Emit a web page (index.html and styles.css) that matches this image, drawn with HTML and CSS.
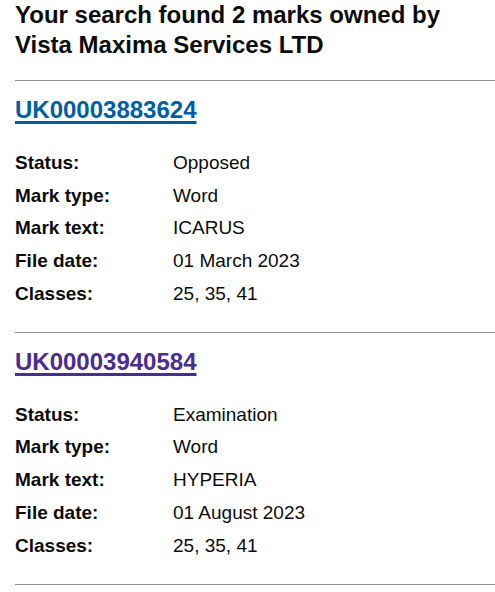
FILE: index.html
```html
<!DOCTYPE html>
<html>
<head>
    <title>Search results</title>
    <link rel="stylesheet" href="styles.css">
</head>
<body>
    <h1 class="page-title">Your search found 2 marks owned by Vista Maxima Services LTD</h1>

    <div class="result">
        <h2 class="mark-id"><a href="#">UK00003883624</a></h2>
        <dl class="summary">
            <div class="row"><dt>Status:</dt><dd>Opposed</dd></div>
            <div class="row"><dt>Mark type:</dt><dd>Word</dd></div>
            <div class="row"><dt>Mark text:</dt><dd>ICARUS</dd></div>
            <div class="row"><dt>File date:</dt><dd>01 March 2023</dd></div>
            <div class="row"><dt>Classes:</dt><dd>25, 35, 41</dd></div>
        </dl>
    </div>

    <div class="result">
        <h2 class="mark-id"><a href="#" class="visited">UK00003940584</a></h2>
        <dl class="summary">
            <div class="row"><dt>Status:</dt><dd>Examination</dd></div>
            <div class="row"><dt>Mark type:</dt><dd>Word</dd></div>
            <div class="row"><dt>Mark text:</dt><dd>HYPERIA</dd></div>
            <div class="row"><dt>File date:</dt><dd>01 August 2023</dd></div>
            <div class="row"><dt>Classes:</dt><dd>25, 35, 41</dd></div>
        </dl>
    </div>
    <div class="result"></div>
</body>
</html>
```

FILE: styles.css
```css
body { font-family: "Liberation Sans", Arial, sans-serif; color: #0b0c0c; margin: 0; padding: 0 0 0 15px; background: #fff; }
.page-title { font-size: 24px; line-height: 30px; font-weight: 700; margin: 0 0 20px; }
.result { border-top: 1px solid #8e8e8e; padding-top: 14px; }
.mark-id { font-size: 24px; line-height: 30px; font-weight: 700; margin: 0 0 25px; }
.mark-id a { color: #005ea5; text-decoration-thickness: 3px; text-underline-offset: 3px; }
.mark-id a.visited { color: #4c2c92; }
.summary { margin: 0 0 26px; font-size: 19px; line-height: 25px; }
.row { display: flex; padding-bottom: 7.7px; }
.row:last-child { padding-bottom: 0; }
dt { width: 158px; font-weight: 700; margin: 0; }
dd { margin: 0; }
```
